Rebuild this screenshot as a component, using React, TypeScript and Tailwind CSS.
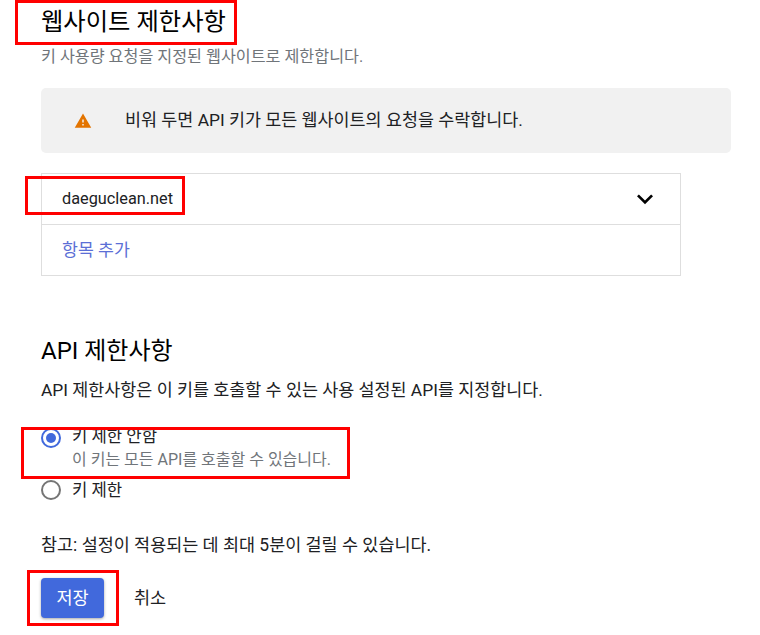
import React from 'react';

const RedBox = ({ className }: { className: string }) => (
    <div className={`absolute border-[3px] border-[#ff0000] ${className}`} />
);

const App: React.FC = () => {
    return (
        <div className="relative w-[760px] h-[635px] overflow-hidden bg-white text-[#202124] font-['Roboto','Noto_Sans_CJK_KR',sans-serif]">
            <div className="pl-[41px] flex flex-col items-start">
                <h1 className="mt-[4px] text-[24.3px] leading-[36px] font-normal text-black">웹사이트 제한사항</h1>
                <p className="mt-[7px] text-[16.2px] leading-[20px] text-[#70757a]">키 사용량 요청을 지정된 웹사이트로 제한합니다.</p>

                <div className="mt-[21px] w-[690px] h-[65px] bg-[#f1f1f1] rounded-[5px] flex items-center pl-[33px]">
                    <svg width="18" height="18" viewBox="0 0 24 24" className="shrink-0" fill="#e37400">
                        <path d="M1 21h22L12 2 1 21zm12-3h-2v-2h2v2zm0-4h-2v-4h2v4z" />
                    </svg>
                    <span className="ml-[33px] text-[17.4px] text-[#202124]">비워 두면 API 키가 모든 웹사이트의 요청을 수락합니다.</span>
                </div>

                <div className="mt-[20px] w-[640px] border border-[#dedede]">
                    <div className="h-[51px] flex items-center justify-between pl-[20px] pr-[19px] border-b border-[#dedede]">
                        <span className="text-[16.3px] text-[#202124]">daeguclean.net</span>
                        <svg width="32" height="32" viewBox="0 0 24 24" fill="#000000">
                            <path d="M16.59 8.59L12 13.17 7.41 8.59 6 10l6 6 6-6z" />
                        </svg>
                    </div>
                    <div className="h-[50px] pt-[2px] flex items-center pl-[20px]">
                        <span className="text-[17.3px] text-[#5c6fd6]">항목 추가</span>
                    </div>
                </div>

                <h2 className="mt-[57px] text-[24px] leading-[36px] font-normal text-black">API 제한사항</h2>
                <p className="mt-[11px] text-[17.4px] leading-[20px] text-[#202124]">API 제한사항은 이 키를 호출할 수 있는 사용 설정된 API를 지정합니다.</p>

                <div className="mt-[26px] flex items-start">
                    <div className="mt-[2px] w-[20px] h-[20px] rounded-full border-2 border-[#4169dc] flex items-center justify-center">
                        <div className="w-[10px] h-[10px] rounded-full bg-[#4169dc]" />
                    </div>
                    <div className="ml-[11px] mt-[1px] flex flex-col">
                        <span className="text-[16.7px] leading-[20px] text-[#202124]">키 제한 안함</span>
                        <span className="mt-[3px] text-[16px] leading-[20px] text-[#70757a]">이 키는 모든 API를 호출할 수 있습니다.</span>
                    </div>
                </div>
                <div className="mt-[10px] flex items-start">
                    <div className="w-[20px] h-[20px] rounded-full border-2 border-[#757575]" />
                    <span className="ml-[11px] mt-[1px] text-[16.7px] leading-[20px] text-[#202124]">키 제한</span>
                </div>

                <p className="mt-[34px] text-[17.45px] leading-[20px] text-[#202124]">참고: 설정이 적용되는 데 최대 5분이 걸릴 수 있습니다.</p>

                <div className="mt-[23px] flex items-center">
                    <button className="w-[63px] h-[40px] rounded-[4px] bg-[#4169dc] text-white text-[17.5px] shadow-[0_1px_3px_rgba(0,0,0,0.35)]">저장</button>
                    <button className="ml-[30px] text-[17.5px] text-[#202124]">취소</button>
                </div>
            </div>

            <RedBox className="left-[15px] top-0 w-[222px] h-[45px]" />
            <RedBox className="left-[25px] top-[176px] w-[160px] h-[39px]" />
            <RedBox className="left-[21px] top-[427px] w-[329px] h-[52px]" />
            <RedBox className="left-[27px] top-[570px] w-[92px] h-[56px]" />
        </div>
    );
};

export default App;
